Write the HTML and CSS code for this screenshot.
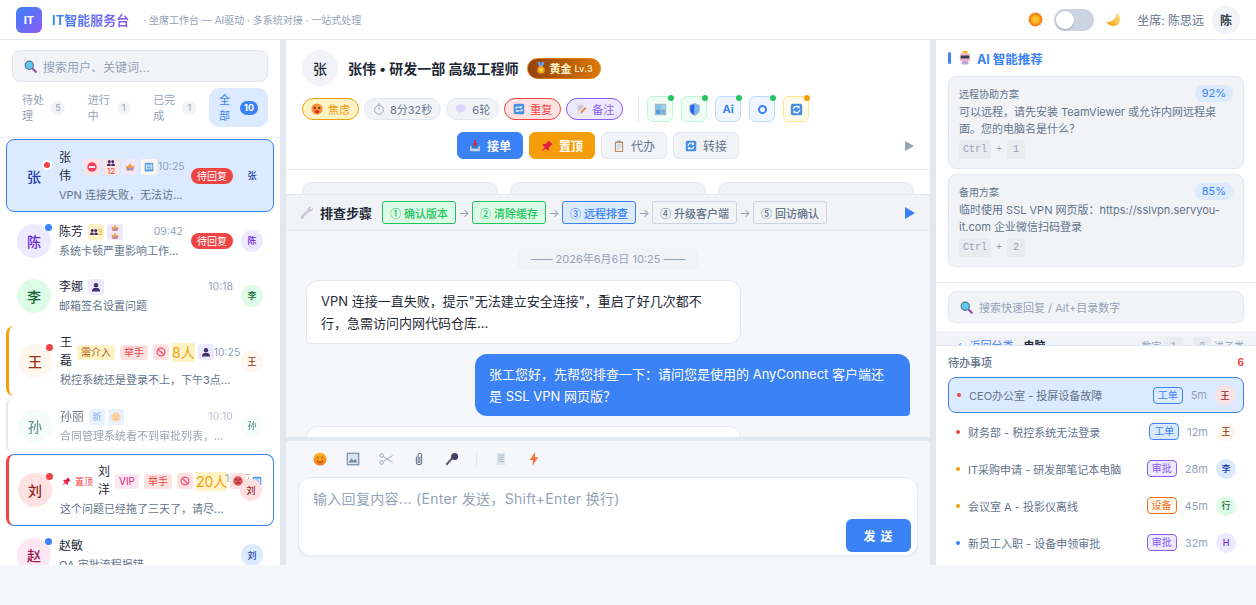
FILE: index.html
```html
<!DOCTYPE html>
<html lang="zh-CN">
<head>
    <meta charset="UTF-8">
    <meta name="viewport" content="width=device-width, initial-scale=1.0">
    <title>IT智能服务台</title>
    <link rel="stylesheet" href="styles.css">
</head>
<body>
    <!-- icon sprite -->
    <svg class="sprite" xmlns="http://www.w3.org/2000/svg">
        <defs>
            <radialGradient id="g-sun"><stop offset="0" stop-color="#fcd34d"/><stop offset="1" stop-color="#f59e0b"/></radialGradient>
            <linearGradient id="g-moon" x1="1" y1="0" x2="0" y2="1"><stop offset="0" stop-color="#fde68a"/><stop offset="1" stop-color="#f59e0b"/></linearGradient>
            <linearGradient id="g-smile" x1="0" y1="0" x2="0" y2="1"><stop offset="0" stop-color="#fbbf24"/><stop offset="1" stop-color="#f97316"/></linearGradient>
            <linearGradient id="g-bolt" x1="0" y1="0" x2="0" y2="1"><stop offset="0" stop-color="#f97316"/><stop offset="1" stop-color="#f87171"/></linearGradient>
        </defs>
        <symbol id="i-sun" viewBox="0 0 16 16"><path d="M8 0l1.3 1.6L11 .6l.6 1.9 2-.2-.1 2 1.9.7-.9 1.8L16 8l-1.5 1.2.9 1.8-1.9.7.1 2-2-.2-.6 1.9-1.7-1L8 16l-1.3-1.6-1.7 1-.6-1.9-2 .2.1-2-1.9-.7.9-1.8L0 8l1.5-1.2-.9-1.8 1.9-.7-.1-2 2 .2L5 .6l1.7 1z" fill="#f97316"/><circle cx="8" cy="8" r="5.6" fill="url(#g-sun)"/></symbol>
        <symbol id="i-moon" viewBox="0 0 16 16"><path d="M11 .5C12 6 7 11 .5 10.500 2 15 9 16.500 13 13 16.500 9.500 15.500 3.500 11 .5z" fill="url(#g-moon)"/></symbol>
        <symbol id="i-search" viewBox="0 0 16 16"><line x1="10" y1="10" x2="14.500" y2="14.500" stroke="#8e4a9e" stroke-width="2.600" stroke-linecap="round"/><circle cx="6.500" cy="6.500" r="5" fill="#5ec8ee" stroke="#56739a" stroke-width="1.500"/></symbol>
        <symbol id="i-robot" viewBox="0 0 16 16"><rect x="5" y="0" width="6" height="3" fill="#fbbf24"/><rect x="2" y="2.500" width="12" height="9" rx="2.500" fill="#eeb4c6"/><rect x="3" y="5" width="10" height="3.600" rx="1.500" fill="#334155"/><rect x="4" y="11.500" width="8" height="4" rx="1.500" fill="#c4a6d8"/></symbol>
        <symbol id="i-medal" viewBox="0 0 16 16"><path d="M3.500 0h3.500l1 4 1-4h3.500l-2.500 7h-4z" fill="#60a5fa"/><circle cx="8" cy="10.500" r="5" fill="#f59e0b"/><circle cx="8" cy="10.500" r="2.600" fill="#fcd34d"/></symbol>
        <symbol id="i-worry" viewBox="0 0 16 16"><circle cx="8" cy="8" r="7.500" fill="#fb923c"/><circle cx="5" cy="6.500" r="1.500" fill="#7c2d12"/><circle cx="11" cy="6.500" r="1.500" fill="#7c2d12"/><ellipse cx="8" cy="11.500" rx="3" ry="2.200" fill="#dc2626"/></symbol>
        <symbol id="i-watch" viewBox="0 0 16 16"><circle cx="8" cy="9" r="5.800" fill="none" stroke="#94a3b8" stroke-width="1.200"/><path d="M8 9V5M6.300 1.500h3.400" fill="none" stroke="#94a3b8" stroke-width="1.200"/></symbol>
        <symbol id="i-bubble" viewBox="0 0 16 16"><ellipse cx="8" cy="7" rx="7" ry="5.200" fill="#ddd6fe"/><path d="M5 11l-1 3.500 4-2.500z" fill="#ddd6fe"/></symbol>
        <symbol id="i-repeat" viewBox="0 0 16 16"><rect x="1" y="1" width="14" height="14" rx="2" fill="#4a90e2"/><path d="M4 8V5.500h7M12 8v2.500H5" fill="none" stroke="#fff" stroke-width="1.300"/><path d="M10 3.500l2.500 2-2.500 2zM6 8.500l-2.500 2 2.500 2z" fill="#fff"/></symbol>
        <symbol id="i-refresh" viewBox="0 0 16 16"><rect x="1" y="1" width="14" height="14" rx="2" fill="#4a90e2"/><path d="M4 7.500a4 4 0 017-2M12 8.500a4 4 0 01-7 2" fill="none" stroke="#fff" stroke-width="1.500"/><path d="M11.800 3v3.500H8.500zM4.200 13V9.500h3.300z" fill="#fff"/></symbol>
        <symbol id="i-memo" viewBox="0 0 16 16"><rect x="2.500" y="1" width="9.500" height="14" fill="#e4e1ea"/><path d="M4 4h6M4 6.500h6M4 9h3" stroke="#a8a3b5"/><line x1="14.500" y1="6" x2="8" y2="13" stroke="#f97316" stroke-width="2.200"/></symbol>
        <symbol id="i-window" viewBox="0 0 16 16"><rect x="1" y="1" width="14" height="14" fill="#a9b5c6"/><rect x="2.500" y="2.500" width="5" height="5" fill="#7cc4ec"/><rect x="8.500" y="2.500" width="5" height="5" fill="#93d5f5"/><rect x="2.500" y="8.500" width="5" height="5" fill="#4f9de0"/><rect x="8.500" y="8.500" width="5" height="5" fill="#6cb6ea"/></symbol>
        <symbol id="i-shield" viewBox="0 0 16 16"><path d="M8 0l6.500 2.500V8c0 4-3 6.500-6.500 8-3.500-1.500-6.500-4-6.500-8V2.500z" fill="#a9b5c6"/><path d="M8 1.200L2.700 3.300V8c0 3.300 2.400 5.300 5.300 6.600z" fill="#2563eb"/><path d="M8 1.200l5.300 2.100V8c0 3.300-2.400 5.300-5.300 6.600z" fill="#7db8f5"/></symbol>
        <symbol id="i-inbox" viewBox="0 0 16 16"><rect x="1.500" y="8" width="13" height="7" rx="1" fill="#c6d5e6"/><rect x="3.500" y="5" width="9" height="6.500" fill="#2f7fd6"/><path d="M6.700 0h2.600v4.500h2L8 9 4.700 4.500h2z" fill="#e11d48"/></symbol>
        <symbol id="i-pin" viewBox="0 0 16 16"><path d="M10 .5l5.500 5.500-1.800.6-3.400 3.300.2 3-1.300 1.300-3-3L1 15l-.2-.2 4.200-5.600-3-3L3.300 5l3 .2 3.300-3.400z" fill="#e11d48"/></symbol>
        <symbol id="i-clipboard" viewBox="0 0 16 16"><rect x="2.500" y="2" width="11" height="14" rx="1" fill="#c98a5e"/><rect x="4" y="4" width="8" height="10.500" fill="#f1f5f9"/><path d="M5 6.500h6M5 9h6M5 11.500h4" stroke="#a0aec0"/><rect x="5.500" y="0.500" width="5" height="3" rx="1" fill="#94a3b8"/></symbol>
        <symbol id="i-wrench" viewBox="0 0 16 16"><path d="M3.500 12.500l8-8" stroke="#cdc7d9" stroke-width="3"/><path d="M9.500 4a3.500 3.500 0 015-3l-2.200 2.200 1.200 1.200L15.700 2.200a3.500 3.500 0 01-4.700 4.500zM1.200 12.200a2 2 0 013.600 2.600 2 2 0 01-3.600-2.600z" fill="#cdc7d9"/></symbol>
        <symbol id="i-smile" viewBox="0 0 16 16"><circle cx="8" cy="8" r="7.500" fill="url(#g-smile)"/><path d="M4.500 6.500q1-1.500 2 0M9.500 6.500q1-1.500 2 0M4.500 10q3.500 3.500 7 0" fill="none" stroke="#7c2d12" stroke-width="1"/></symbol>
        <symbol id="i-picture" viewBox="0 0 16 16"><rect x="1.500" y="1.500" width="13" height="13" fill="#dbe4ee" stroke="#7f96b0" stroke-width="1.500"/><path d="M3 12l3-5 2.500 3 2-2 2.500 4z" fill="#6f88a6"/></symbol>
        <symbol id="i-scissors" viewBox="0 0 16 16"><circle cx="3" cy="4" r="2" fill="none" stroke="#94a3b8"/><circle cx="3" cy="12" r="2" fill="none" stroke="#94a3b8"/><path d="M4.700 5l10.800 7M4.700 11L15.500 4" stroke="#94a3b8"/></symbol>
        <symbol id="i-paperclip" viewBox="0 0 16 16"><path d="M5 5v6.500a3 3 0 006 0V3.500a2 2 0 00-4 0V11a1 1 0 002 0V5" fill="none" stroke="#64748b" stroke-width="1.200"/></symbol>
        <symbol id="i-mic" viewBox="0 0 16 16"><line x1="1.500" y1="14.500" x2="9" y2="6" stroke="#6b6280" stroke-width="2.400"/><circle cx="11" cy="5" r="4" fill="#4c3f63"/></symbol>
        <symbol id="i-doc" viewBox="0 0 16 16"><rect x="3" y="1" width="10" height="14" fill="#e2e8f0"/><path d="M4.500 3.500h7M4.500 6h7M4.500 8.500h7M4.500 11h7" stroke="#a3b1c2"/></symbol>
        <symbol id="i-bolt" viewBox="0 0 16 16"><path d="M9.500 0L3 9h4l-1 7 7-10H9z" fill="url(#g-bolt)"/></symbol>
        <symbol id="i-noentry" viewBox="0 0 16 16"><circle cx="8" cy="8" r="7.500" fill="#f43f5e"/><rect x="3" y="6.500" width="10" height="3" fill="#fff"/></symbol>
        <symbol id="i-people" viewBox="0 0 16 16"><circle cx="4.500" cy="5" r="3" fill="#43306e"/><circle cx="11.500" cy="5" r="3" fill="#43306e"/><path d="M0 14c0-4 2-5 4.500-5S7.500 10 7.500 14zM8.500 14c0-4 1-5 3-5s4.500 1 4.500 5z" fill="#43306e"/></symbol>
        <symbol id="i-person" viewBox="0 0 16 16"><circle cx="8" cy="5" r="3.500" fill="#43306e"/><path d="M1.500 15c0-4.500 3-6 6.500-6s6.500 1.500 6.500 6z" fill="#43306e"/></symbol>
        <symbol id="i-ban" viewBox="0 0 16 16"><circle cx="8" cy="8" r="6.300" fill="none" stroke="#f0517a" stroke-width="2"/><line x1="3.500" y1="3.500" x2="12.500" y2="12.500" stroke="#f0517a" stroke-width="2"/></symbol>
        <symbol id="i-angry" viewBox="0 0 16 16"><circle cx="8" cy="8" r="7.500" fill="#e0525a"/><path d="M3.500 5l3 1.500M12.500 5l-3 1.500M5 11.500q3-2 6 0" fill="none" stroke="#5f1d1d" stroke-width="1.300"/></symbol>
        <symbol id="i-parcel" viewBox="0 0 16 16"><path d="M1 5l3 2 4-5 4 5 3-2-1.500 9h-11z" fill="#f59e42"/><rect x="3" y="9" width="10" height="4" fill="#a78bda"/></symbol>
        <symbol id="i-screen" viewBox="0 0 16 16"><rect x="1" y="1" width="14" height="14" rx="2" fill="#5aa2ea"/><rect x="3.500" y="5" width="9" height="6" fill="none" stroke="#fff" stroke-width="1.200"/><line x1="3.500" y1="7.500" x2="12.500" y2="7.500" stroke="#fff"/></symbol>
        <symbol id="i-neutral" viewBox="0 0 16 16"><circle cx="8" cy="8" r="7.500" fill="#fbbf77"/><path d="M4.500 6.500h2M9.500 6.500h2M5.500 11h5" stroke="#b45309"/></symbol>
    </svg>

    <header class="topbar">
        <div class="logo">IT</div>
        <div class="brand">IT智能服务台</div>
        <div class="slogan">· 坐席工作台 — AI驱动 · 多系统对接 · 一站式处理</div>
        <div class="topbar-right">
            <svg class="ico theme-icon"><use href="#i-sun"/></svg>
            <span class="switch"><span class="knob"></span></span>
            <svg class="ico theme-icon"><use href="#i-moon"/></svg>
            <span class="agent">坐席: 陈思远</span>
            <span class="agent-avatar">陈</span>
        </div>
    </header>

    <main class="app">
        <!-- left: conversation list -->
        <aside class="left">
            <div class="left-head">
                <div class="search"><svg class="ico search-icon"><use href="#i-search"/></svg>搜索用户、关键词...</div>
                <div class="tabs">
                    <div class="tab"><span class="tab-text">待处理</span><span class="count">5</span></div>
                    <div class="tab"><span class="tab-text">进行中</span><span class="count">1</span></div>
                    <div class="tab"><span class="tab-text">已完成</span><span class="count">1</span></div>
                    <div class="tab active"><span class="tab-text">全部</span><span class="count">10</span></div>
                </div>
            </div>
            <div class="list">
                <div class="item selected">
                    <div class="avatar av-blue av-plain">张<i class="dot dot-red dot-ring"></i></div>
                    <div class="item-main">
                        <div class="name-row">
                            <span class="name narrow">张伟</span>
                            <span class="tag t-red"><svg class="ico"><use href="#i-noentry"/></svg></span>
                            <span class="tag t-red stack"><svg class="ico"><use href="#i-people"/></svg><b>12</b></span>
                            <span class="tag t-purple"><svg class="ico"><use href="#i-parcel"/></svg></span>
                            <span class="tag t-cream"><svg class="ico"><use href="#i-screen"/></svg></span>
                            <span class="time">10:25</span>
                        </div>
                        <div class="preview">VPN 连接失败，无法访...</div>
                    </div>
                    <span class="badge">待回复</span>
                    <span class="mini av-blue av-plain">张</span>
                </div>

                <div class="item">
                    <div class="avatar av-purple">陈<i class="dot dot-blue"></i></div>
                    <div class="item-main">
                        <div class="name-row">
                            <span class="name">陈芳</span>
                            <span class="tag t-yellow wide-count"><svg class="ico"><use href="#i-people"/></svg><b>3</b></span>
                            <span class="tag t-purple stack"><svg class="ico"><use href="#i-parcel"/></svg><svg class="ico"><use href="#i-parcel"/></svg></span>
                            <span class="time">09:42</span>
                        </div>
                        <div class="preview">系统卡顿严重影响工作...</div>
                    </div>
                    <span class="badge">待回复</span>
                    <span class="mini av-purple">陈</span>
                </div>

                <div class="item">
                    <div class="avatar av-green">李</div>
                    <div class="item-main">
                        <div class="name-row">
                            <span class="name">李娜</span>
                            <span class="tag t-purple"><svg class="ico"><use href="#i-person"/></svg></span>
                            <span class="time">10:18</span>
                        </div>
                        <div class="preview">邮箱签名设置问题</div>
                    </div>
                    <span class="mini av-green">李</span>
                </div>

                <div class="item edge-orange">
                    <div class="avatar av-orange">王<i class="dot dot-red"></i></div>
                    <div class="item-main">
                        <div class="name-row">
                            <span class="name narrow">王磊</span>
                            <span class="tag t-yellow text">需介入</span>
                            <span class="tag t-red text">举手</span>
                            <span class="tag t-red"><svg class="ico"><use href="#i-ban"/></svg></span>
                            <span class="people">8人</span>
                            <span class="tag t-purple"><svg class="ico"><use href="#i-person"/></svg></span>
                            <span class="time tight">10:25</span>
                        </div>
                        <div class="preview">税控系统还是登录不上，下午3点...</div>
                    </div>
                    <span class="mini av-orange">王</span>
                </div>

                <div class="item edge-gray">
                    <div class="avatar av-teal">孙</div>
                    <div class="item-main">
                        <div class="name-row">
                            <span class="name">孙丽</span>
                            <span class="tag t-blue">新</span>
                            <span class="tag t-blue"><svg class="ico"><use href="#i-neutral"/></svg></span>
                            <span class="time">10:10</span>
                        </div>
                        <div class="preview">合同管理系统看不到审批列表，...</div>
                    </div>
                    <span class="mini av-teal">孙</span>
                </div>

                <div class="item edge-red">
                    <div class="avatar av-red">刘<i class="dot dot-red"></i></div>
                    <div class="item-main">
                        <div class="name-row overflow">
                            <span class="time over">10:07</span>
                            <svg class="ico pin"><use href="#i-pin"/></svg>
                            <span class="pin-text">置顶</span>
                            <span class="name narrow">刘洋</span>
                            <span class="tag t-pink text">VIP</span>
                            <span class="tag t-red text">举手</span>
                            <span class="tag t-red"><svg class="ico"><use href="#i-ban"/></svg></span>
                            <span class="people">20人</span>
                            <span class="tag t-red"><svg class="ico"><use href="#i-angry"/></svg></span>
                            <span class="tag t-cream"><svg class="ico"><use href="#i-screen"/></svg></span>
                        </div>
                        <div class="preview">这个问题已经拖了三天了，请尽...</div>
                    </div>
                    <span class="mini av-red on-top">刘</span>
                </div>

                <div class="item last">
                    <div class="avatar av-pink">赵<i class="dot dot-blue"></i></div>
                    <div class="item-main">
                        <div class="name-row">
                            <span class="name">赵敏</span>
                        </div>
                        <div class="preview">OA 审批流程报错</div>
                    </div>
                    <span class="mini av-blue">刘</span>
                </div>
            </div>
        </aside>

        <!-- center: conversation -->
        <section class="center">
            <div class="info">
                <div class="user-row">
                    <span class="user-avatar">张</span>
                    <span class="user-name">张伟 • 研发一部 高级工程师</span>
                    <span class="level"><svg class="ico"><use href="#i-medal"/></svg>黄金 <small>Lv.3</small></span>
                </div>
                <div class="chip-row">
                    <span class="chip c-yellow"><svg class="ico"><use href="#i-worry"/></svg>焦虑</span>
                    <span class="chip"><svg class="ico"><use href="#i-watch"/></svg>8分32秒</span>
                    <span class="chip"><svg class="ico"><use href="#i-bubble"/></svg>6轮</span>
                    <span class="chip c-red"><svg class="ico"><use href="#i-repeat"/></svg>重复</span>
                    <span class="chip c-purple"><svg class="ico"><use href="#i-memo"/></svg>备注</span>
                    <span class="vline"></span>
                    <span class="sys s-green"><svg class="ico"><use href="#i-window"/></svg><i class="sys-dot"></i></span>
                    <span class="sys s-green"><svg class="ico"><use href="#i-shield"/></svg><i class="sys-dot"></i></span>
                    <span class="sys s-blue"><b>Ai</b><i class="sys-dot"></i></span>
                    <span class="sys s-blue"><span class="ring"></span><i class="sys-dot"></i></span>
                    <span class="sys s-yellow"><svg class="ico"><use href="#i-refresh"/></svg><i class="sys-dot orange"></i></span>
                </div>
                <div class="action-row">
                    <button class="act a-blue"><svg class="ico"><use href="#i-inbox"/></svg>接单</button>
                    <button class="act a-orange"><svg class="ico"><use href="#i-pin"/></svg>置顶</button>
                    <button class="act"><svg class="ico"><use href="#i-clipboard"/></svg>代办</button>
                    <button class="act"><svg class="ico"><use href="#i-refresh"/></svg>转接</button>
                    <span class="more"></span>
                </div>
            </div>
            <div class="cards-strip">
                <div class="ghost-card"></div>
                <div class="ghost-card"></div>
                <div class="ghost-card"></div>
            </div>
            <div class="steps">
                <span class="steps-title"><svg class="ico"><use href="#i-wrench"/></svg>排查步骤</span>
                <span class="step done"><i>①</i>确认版本</span>
                <span class="arrow">→</span>
                <span class="step done"><i>②</i>清除缓存</span>
                <span class="arrow">→</span>
                <span class="step now"><i>③</i>远程排查</span>
                <span class="arrow">→</span>
                <span class="step"><i>④</i>升级客户端</span>
                <span class="arrow">→</span>
                <span class="step"><i>⑤</i>回访确认</span>
                <span class="steps-more"></span>
            </div>
            <div class="chat">
                <div class="date"><span>—— 2026年6月6日 10:25 ——</span></div>
                <div class="bubble user">VPN 连接一直失败，提示"无法建立安全连接"，重启了好几次都不行，急需访问内网代码仓库...</div>
                <div class="bubble agent-msg">张工您好，先帮您排查一下：请问您是使用的 AnyConnect 客户端还是 SSL VPN 网页版？</div>
                <div class="bubble user">用的是 AnyConnect 客户端，版本不太清楚</div>
            </div>
            <div class="composer">
                <div class="tools">
                    <svg class="ico"><use href="#i-smile"/></svg>
                    <svg class="ico"><use href="#i-picture"/></svg>
                    <svg class="ico"><use href="#i-scissors"/></svg>
                    <svg class="ico"><use href="#i-paperclip"/></svg>
                    <svg class="ico"><use href="#i-mic"/></svg>
                    <i class="tool-line"></i>
                    <svg class="ico"><use href="#i-doc"/></svg>
                    <svg class="ico"><use href="#i-bolt"/></svg>
                </div>
                <div class="input-box">
                    <div class="placeholder">输入回复内容... (Enter 发送，Shift+Enter 换行)</div>
                    <div class="send-row"><button class="send">发 送</button></div>
                </div>
            </div>
        </section>

        <!-- right: ai + quick reply + todo -->
        <aside class="right">
            <div class="ai">
                <div class="ai-title"><span class="ai-mark"></span><svg class="ico"><use href="#i-robot"/></svg>AI 智能推荐</div>
                <div class="rec">
                    <div class="rec-head"><span>远程协助方案</span><span class="pct">92%</span></div>
                    <p>可以远程，请先安装 TeamViewer 或允许内网远程桌面。您的电脑名是什么？</p>
                    <div class="keys"><kbd>Ctrl</kbd><span>+</span><kbd>1</kbd></div>
                </div>
                <div class="rec">
                    <div class="rec-head"><span>备用方案</span><span class="pct">85%</span></div>
                    <p>临时使用 SSL VPN 网页版：https://sslvpn.servyou-it.com 企业微信扫码登录</p>
                    <div class="keys"><kbd>Ctrl</kbd><span>+</span><kbd>2</kbd></div>
                </div>
            </div>
            <div class="quick">
                <div class="search small"><svg class="ico search-icon"><use href="#i-search"/></svg>搜索快速回复 / Alt+目录数字</div>
            </div>
            <div class="crumbs">
                <span class="back">← 返回分类</span><b>电脑</b>
                <span class="crumb-hint">数字 <kbd>1</kbd> - <kbd>9</kbd> 进子类</span>
            </div>
            <div class="todo">
                <div class="todo-head"><span>待办事项</span><b>6</b></div>
                <div class="todo-row current">
                    <i class="pt red"></i><span class="todo-text">CEO办公室 - 投屏设备故障</span>
                    <span class="kind k-blue">工单</span><span class="mins">5m</span><span class="mini av-red">王</span>
                </div>
                <div class="todo-row">
                    <i class="pt red"></i><span class="todo-text">财务部 - 税控系统无法登录</span>
                    <span class="kind k-blue">工单</span><span class="mins">12m</span><span class="mini av-orange">王</span>
                </div>
                <div class="todo-row">
                    <i class="pt orange"></i><span class="todo-text">IT采购申请 - 研发部笔记本电脑</span>
                    <span class="kind k-purple">审批</span><span class="mins">28m</span><span class="mini av-blue">李</span>
                </div>
                <div class="todo-row">
                    <i class="pt orange"></i><span class="todo-text">会议室 A - 投影仪离线</span>
                    <span class="kind k-orange">设备</span><span class="mins">45m</span><span class="mini av-green">行</span>
                </div>
                <div class="todo-row">
                    <i class="pt blue"></i><span class="todo-text">新员工入职 - 设备申领审批</span>
                    <span class="kind k-purple">审批</span><span class="mins">32m</span><span class="mini av-purple">H</span>
                </div>
            </div>
        </aside>
    </main>
</body>
</html>
```

FILE: styles.css
```css
* {
    margin: 0;
    padding: 0;
    box-sizing: border-box;
}

html, body {
    height: 605px;
    overflow: hidden;
}

body {
    background: #f5f7fb;
    color: #1f2937;
    font-family: Inter, "Noto Sans CJK SC", sans-serif;
    font-size: 13px;
}

button {
    font-family: inherit;
    border: none;
}

.sprite {
    position: absolute;
    width: 0;
    height: 0;
}

.ico {
    width: 1em;
    height: 1em;
    flex: none;
    display: inline-block;
}

/* top bar */
.topbar {
    height: 40px;
    display: flex;
    align-items: center;
    padding: 0 16px;
    background: #fff;
    border-bottom: 1px solid #e2e8f0;
}

.logo {
    width: 26px;
    height: 26px;
    border-radius: 6px;
    background: linear-gradient(135deg, #3b82f6, #8b5cf6);
    color: #fff;
    font-size: 11px;
    font-weight: 700;
    display: flex;
    align-items: center;
    justify-content: center;
}

.brand {
    margin-left: 10px;
    font-size: 13px;
    font-weight: 700;
    background: linear-gradient(90deg, #3b82f6, #8b5cf6);
    -webkit-background-clip: text;
    background-clip: text;
    color: transparent;
}

.slogan {
    margin-left: 14px;
    font-size: 10px;
    color: #94a3b8;
}

.topbar-right {
    margin-left: auto;
    display: flex;
    align-items: center;
}

.theme-icon {
    font-size: 15px;
}

.switch {
    width: 40px;
    height: 22px;
    margin: 0 12px 0 11px;
    padding: 2px;
    border-radius: 11px;
    background: #cbd5e1;
}

.knob {
    display: block;
    width: 18px;
    height: 18px;
    border-radius: 50%;
    background: #fff;
    box-shadow: 0 1px 2px rgba(0, 0, 0, 0.2);
}

.agent {
    margin-left: 16px;
    font-size: 12px;
    color: #64748b;
}

.agent-avatar {
    width: 28px;
    height: 28px;
    margin-left: 8px;
    border-radius: 50%;
    background: #f1f3f7;
    color: #374151;
    font-size: 12px;
    font-weight: 700;
    display: flex;
    align-items: center;
    justify-content: center;
}

/* columns */
.app {
    height: 525px;
    display: grid;
    grid-template-columns: 280px 655px 321px;
    overflow: hidden;
}

.left, .center, .right {
    height: 525px;
    overflow: hidden;
    display: flex;
    flex-direction: column;
    background: #fff;
}

.center {
    border-left: 6px solid #e2e8f0;
    border-right: 5px solid #e2e8f0;
}

.right {
    border-left: 1px solid #e2e8f0;
}

/* left column */
.left-head {
    height: 98px;
    padding: 10px 12px 0;
    border-bottom: 1px solid #e2e8f0;
    flex: none;
}

.search {
    height: 32px;
    display: flex;
    align-items: center;
    padding-left: 11px;
    background: #f1f3f7;
    border: 1px solid #e2e8f0;
    border-radius: 8px;
    color: #94a3b8;
    font-size: 12px;
}

.search-icon {
    font-size: 13px;
    margin-right: 6px;
}

.tabs {
    display: grid;
    grid-template-columns: 1fr 1fr 1fr 59px;
    margin-top: 6px;
    height: 39px;
}

.tab {
    display: flex;
    align-items: center;
    gap: 7px;
    padding: 0 10px;
    border-radius: 10px;
    color: #94a3b8;
    font-size: 11px;
    line-height: 16px;
}

.tab-text {
    width: 22px;
    flex: none;
}

.tab .count {
    min-width: 14px;
    height: 14px;
    border-radius: 7px;
    background: #f1f3f7;
    color: #94a3b8;
    font-size: 9px;
    line-height: 14px;
    text-align: center;
    flex: none;
}

.tab.active {
    background: #dbeafe;
    color: #3b82f6;
}

.tab.active .tab-text {
    width: 12px;
}

.tab.active .count {
    min-width: 18px;
    margin-left: 2px;
    background: #3b82f6;
    color: #fff;
    font-weight: 700;
}

.list {
    flex: 1;
    padding: 1px 6px 0;
    display: flex;
    flex-direction: column;
    gap: 2px;
    overflow: hidden;
}

.item {
    height: 53px;
    flex: none;
    position: relative;
    display: flex;
    align-items: center;
    padding: 0 11px;
    border-radius: 8px;
}

.item.selected {
    height: 73px;
    background: #dbeafe;
    border: 1px solid #3b82f6;
    padding: 0 10px;
}

.edge-orange {
    height: 70px;
    margin-top: 2px;
    padding-left: 9px;
    border-left: 3px solid #f59e0b;
}

.edge-gray {
    height: 55px;
    padding-left: 10px;
    border-left: 2px solid #e2e8f0;
}

.edge-gray > * {
    opacity: 0.65;
}

.edge-red {
    height: 72px;
    margin-top: -1px;
    padding-left: 9px;
    border: 1px solid #3b82f6;
    border-left: 3px solid #ef4444;
}

.item.last {
    height: 50px;
    margin-top: 2px;
}

.avatar {
    width: 34px;
    height: 34px;
    flex: none;
    position: relative;
    border-radius: 50%;
    font-size: 14px;
    font-weight: 500;
    display: flex;
    align-items: center;
    justify-content: center;
}

.av-blue { background: #dbeafe; color: #1e40af; }
.av-purple { background: #ede9fe; color: #6d28d9; }
.av-green { background: #dcfce7; color: #166534; }
.av-orange { background: #fff7ed; color: #9a3412; }
.av-teal { background: #f0fdfa; color: #115e59; }
.av-red { background: #fee2e2; color: #991b1b; }
.av-pink { background: #fce7f3; color: #9d174d; }

.dot {
    position: absolute;
    top: 0;
    right: -1px;
    width: 7px;
    height: 7px;
    border-radius: 50%;
}

.dot-red { background: #ef4444; }
.dot-blue { background: #3b82f6; }
.dot-ring {
    width: 10px;
    height: 10px;
    top: 1px;
    right: -1px;
    background: #ef4444;
    border: 2px solid #fff;
}

.item-main {
    flex: 1;
    min-width: 0;
    margin-left: 8px;
}

.name-row {
    display: flex;
    align-items: center;
    gap: 3px;
}

.name {
    font-size: 12px;
    line-height: 18px;
    color: #1f2937;
    flex: none;
    margin-right: 2px;
}

.name.narrow {
    width: 12px;
}

.selected .name.narrow {
    margin-right: 10px;
}

.tag {
    width: 16px;
    min-height: 16px;
    flex: none;
    display: flex;
    align-items: center;
    justify-content: center;
    flex-wrap: wrap;
    border-radius: 3px;
    font-size: 9px;
    line-height: 16px;
    text-align: center;
}

.tag .ico {
    font-size: 10px;
}

.tag.text {
    width: auto;
    min-height: 15px;
    line-height: 15px;
    padding: 0 4px;
    font-size: 10px;
    margin-right: 2px;
}

.tag.stack {
    line-height: 8px;
    flex-direction: column;
    flex-wrap: nowrap;
    height: 16px;
}

.tag.stack .ico {
    font-size: 8px;
}

.tag.stack b {
    font-weight: 400;
    color: #ef4444;
    font-size: 8px;
}

.tag.wide-count {
    flex-wrap: nowrap;
}

.tag.wide-count .ico {
    font-size: 8px;
}

.tag.wide-count b {
    font-weight: 400;
    color: #f59e0b;
    font-size: 8px;
}

.t-red { background: #fee2e2; color: #ef4444; }
.t-purple { background: #ede9fe; color: #7c3aed; }
.t-yellow { background: #fef3c7; color: #b45309; }
.t-cream { background: #fff7ed; color: #f97316; }
.t-blue { background: #dbeafe; color: #3b82f6; }
.t-pink { background: #fce7f3; color: #db2777; }

.people {
    flex: none;
    background: #fef3c7;
    color: #f59e0b;
    font-size: 14px;
    line-height: 19px;
}

.pin {
    font-size: 9px;
    margin-right: 1px;
}

.pin-text {
    flex: none;
    color: #ef4444;
    font-size: 9px;
    margin-right: 2px;
}

.time {
    margin-left: auto;
    flex: none;
    color: #94a3b8;
    font-size: 10.5px;
}

.selected .time {
    margin-left: -2px;
}

.time.tight {
    margin-left: -3px;
}

.name-row.overflow {
    position: relative;
    margin-left: 2px;
    margin-right: -40px;
}

.name-row.overflow .tag {
    position: relative;
}

.time.over {
    position: absolute;
    left: 163px;
    top: 9px;
}

.preview {
    margin-top: 2px;
    font-size: 11px;
    line-height: 16px;
    color: #64748b;
    white-space: nowrap;
    overflow: hidden;
}

.badge {
    flex: none;
    width: 42px;
    height: 16px;
    margin: 0 8px;
    border-radius: 8px;
    background: #ef4444;
    color: #fff;
    font-size: 10px;
    line-height: 16px;
    text-align: center;
}

.mini {
    width: 22px;
    height: 22px;
    flex: none;
    margin-left: 8px;
    border-radius: 50%;
    font-size: 9px;
    font-weight: 500;
    display: flex;
    align-items: center;
    justify-content: center;
}

.badge + .mini {
    margin-left: 0;
}

.on-top {
    position: relative;
    z-index: 1;
}

/* center column */
.info {
    height: 130px;
    flex: none;
    padding: 10px 16px 0;
    border-bottom: 1px solid #e2e8f0;
}

.user-row {
    display: flex;
    align-items: center;
    height: 36px;
}

.user-avatar {
    width: 36px;
    height: 36px;
    border-radius: 50%;
    background: #f1f3f7;
    font-size: 14px;
    font-weight: 500;
    display: flex;
    align-items: center;
    justify-content: center;
}

.user-name {
    margin-left: 10px;
    font-size: 14px;
    font-weight: 700;
}

.level {
    margin-left: 8px;
    height: 21px;
    padding: 0 7px;
    display: flex;
    align-items: center;
    gap: 3px;
    border: 1px solid #d97706;
    border-radius: 11px;
    background: linear-gradient(90deg, #92400e, #d97706);
    color: #fef3c7;
    font-size: 11px;
    font-weight: 700;
}

.level .ico {
    font-size: 12px;
}

.level small {
    font-size: 9px;
    opacity: 0.85;
}

.chip-row {
    display: flex;
    align-items: center;
    height: 26px;
    margin-top: 10px;
    gap: 5px;
}

.chip {
    height: 22px;
    padding: 0 8px;
    display: flex;
    align-items: center;
    gap: 5px;
    border-radius: 11px;
    background: #f1f3f7;
    border: 1px solid #e2e8f0;
    color: #64748b;
    font-size: 11px;
}

.chip .ico {
    font-size: 12px;
}

.c-yellow { background: #fef3c7; border-color: #f59e0b; color: #f59e0b; }
.c-red { background: #fee2e2; border-color: #ef4444; color: #ef4444; }
.c-purple { background: #ede9fe; border-color: #8b5cf6; color: #8b5cf6; }

.vline {
    width: 1px;
    height: 26px;
    margin: 0 3px 0 10px;
    background: #e2e8f0;
}

.sys {
    width: 26px;
    height: 26px;
    position: relative;
    margin-right: 3px;
    border-radius: 6px;
    border: 1px solid #bfdbfe;
    background: #eff6ff;
    display: flex;
    align-items: center;
    justify-content: center;
}

.sys .ico {
    font-size: 13px;
}

.sys b {
    color: #3b82f6;
    font-size: 11px;
}

.s-green { background: #f0fdf4; border-color: #bbf7d0; }
.s-yellow { background: #fffbeb; border-color: #fde68a; }

.ring {
    width: 9px;
    height: 9px;
    border: 2px solid #3b82f6;
    border-radius: 50%;
}

.sys-dot {
    position: absolute;
    top: -2px;
    right: -2px;
    width: 6px;
    height: 6px;
    border-radius: 50%;
    background: #22c55e;
}

.sys-dot.orange {
    background: #f59e0b;
}

.action-row {
    display: flex;
    align-items: center;
    height: 27px;
    margin-top: 10px;
    padding-left: 155px;
    gap: 6px;
}

.act {
    width: 66px;
    height: 27px;
    border-radius: 6px;
    background: #f1f3f7;
    border: 1px solid #e2e8f0;
    color: #64748b;
    font-size: 12px;
    display: flex;
    align-items: center;
    justify-content: center;
    gap: 6px;
}

.act .ico {
    font-size: 12px;
}

.a-blue { background: #3b82f6; border-color: #3b82f6; color: #fff; font-weight: 700; }
.a-orange { background: #f59e0b; border-color: #f59e0b; color: #fff; font-weight: 700; }

.more {
    margin-left: auto;
    border-left: 9px solid #94a3b8;
    border-top: 5px solid transparent;
    border-bottom: 5px solid transparent;
}

.cards-strip {
    height: 24px;
    flex: none;
    padding: 12px 16px 0;
    display: flex;
    gap: 12px;
    overflow: hidden;
}

.ghost-card {
    flex: 1;
    height: 40px;
    border-radius: 10px;
    background: #f1f3f7;
    border: 1px solid #e2e8f0;
}

.steps {
    height: 37px;
    flex: none;
    padding: 0 15px 0 14px;
    display: flex;
    align-items: center;
    background: #f1f3f7;
    border-top: 1px solid #e2e8f0;
    border-bottom: 1px solid #e2e8f0;
}

.steps-title {
    display: flex;
    align-items: center;
    gap: 7px;
    font-size: 13px;
    font-weight: 700;
    margin-right: 10px;
}

.steps-title .ico {
    font-size: 13px;
}

.step {
    height: 23px;
    padding: 0 7px;
    display: flex;
    align-items: center;
    border-radius: 3px;
    border: 1px solid #cbd5e1;
    color: #64748b;
    font-size: 11px;
    font-weight: 500;
    flex: none;
}

.step i {
    width: 14px;
    font-family: "Noto Sans CJK SC", sans-serif;
    font-style: normal;
    font-size: 11px;
}

.step.done { background: #dcfce7; border-color: #22c55e; color: #22c55e; }
.step.now { background: #dbeafe; border-color: #3b82f6; color: #3b82f6; }

.arrow {
    width: 16px;
    flex: none;
    text-align: center;
    color: #94a3b8;
    font-size: 12px;
}

.steps-more {
    margin-left: auto;
    border-left: 10px solid #3b82f6;
    border-top: 6px solid transparent;
    border-bottom: 6px solid transparent;
}

.chat {
    height: 206px;
    flex: none;
    padding: 17px 20px 0;
    background: #f5f7fb;
    overflow: hidden;
    display: flex;
    flex-direction: column;
}

.date {
    text-align: center;
    height: 22px;
    margin-bottom: 10px;
    flex: none;
}

.date span {
    display: inline-block;
    height: 22px;
    padding: 0 13px;
    border-radius: 8px;
    background: #f1f3f7;
    color: #94a3b8;
    font-size: 11px;
    line-height: 22px;
}

.bubble {
    width: 435px;
    flex: none;
    padding: 9px 14px;
    margin-bottom: 10px;
    border-radius: 12px;
    font-size: 13px;
    line-height: 22px;
}

.bubble.user {
    background: #fff;
    border: 1px solid #e2e8f0;
    border-bottom-left-radius: 4px;
    color: #1f2937;
}

.bubble.agent-msg {
    align-self: flex-end;
    background: #3b82f6;
    color: #fff;
    border-bottom-right-radius: 4px;
}

.composer {
    flex: 1;
    background: #f5f7fb;
    border-top: 4px solid #e2e8f0;
    padding: 0 12px;
}

.tools {
    height: 36px;
    display: flex;
    align-items: center;
    gap: 19px;
    padding-left: 15px;
}

.tools .ico {
    font-size: 14px;
}

.tool-line {
    width: 1px;
    height: 14px;
    margin: 0 -2px;
    background: #e2e8f0;
}

.input-box {
    height: 79px;
    padding: 12px 6px 4px 14px;
    background: #fff;
    border: 1px solid #e2e8f0;
    border-radius: 12px;
    box-shadow: 0 1px 2px rgba(0, 0, 0, 0.05);
}

.placeholder {
    color: #94a3b8;
    font-size: 14px;
    letter-spacing: 0.3px;
    line-height: 18px;
}

.send-row {
    display: flex;
    justify-content: flex-end;
    margin-top: 11px;
}

.send {
    width: 65px;
    height: 33px;
    border-radius: 6px;
    background: #3b82f6;
    color: #fff;
    font-size: 12px;
    letter-spacing: 1px;
    font-weight: 700;
}

/* right column */
.ai {
    height: 243px;
    flex: none;
    padding: 0 12px;
    border-bottom: 1px solid #e2e8f0;
}

.ai-title {
    height: 36px;
    display: flex;
    align-items: center;
    color: #3b82f6;
    font-size: 12.5px;
    font-weight: 700;
}

.ai-mark {
    width: 3px;
    height: 12px;
    margin-right: 7px;
    border-radius: 2px;
    background: #3b82f6;
}

.ai-title .ico {
    margin-right: 5px;
    font-size: 14px;
}

.rec {
    height: 93px;
    margin-bottom: 5px;
    padding: 8px 10px 0;
    background: #f1f3f7;
    border: 1px solid #e2e8f0;
    border-radius: 8px;
}

.rec-head {
    display: flex;
    justify-content: space-between;
    align-items: center;
    height: 17px;
    color: #64748b;
    font-size: 10px;
}

.pct {
    padding: 0 7px;
    border-radius: 8px;
    background: #dbeafe;
    color: #3b82f6;
    font-size: 11px;
    line-height: 17px;
}

.rec p {
    margin-top: 2px;
    color: #64748b;
    font-size: 11px;
    line-height: 17px;
}

.keys {
    display: flex;
    align-items: center;
    gap: 5px;
    margin-top: 2px;
    color: #94a3b8;
    font-size: 10px;
    font-family: "Liberation Mono", monospace;
}

kbd {
    display: inline-block;
    min-width: 18px;
    padding: 0 4px;
    height: 19px;
    line-height: 19px;
    text-align: center;
    border-radius: 3px;
    background: #e8ecf1;
    color: #94a3b8;
    font-family: "Liberation Mono", monospace;
    font-size: 10px;
}

.quick {
    height: 48px;
    flex: none;
    padding: 8px 12px 0;
}

.search.small {
    font-size: 11px;
}

.crumbs {
    height: 14px;
    flex: none;
    overflow: hidden;
    padding: 6px 12px 0 20px;
    display: flex;
    align-items: flex-start;
    background: #f1f3f7;
    font-size: 11px;
    line-height: 19px;
}

.back {
    color: #3b82f6;
    margin-right: 10px;
}

.crumb-hint {
    margin-left: auto;
    display: flex;
    gap: 3px;
    color: #94a3b8;
    font-size: 10px;
}

.todo {
    flex: 1;
    padding: 0 12px;
    border-top: 1px solid #e2e8f0;
    background: #fff;
}

.todo-head {
    height: 31px;
    display: flex;
    align-items: center;
    justify-content: space-between;
    color: #64748b;
    font-size: 11px;
    font-weight: 500;
}

.todo-head b {
    color: #ef4444;
    font-size: 10px;
}

.todo-row {
    height: 37px;
    display: flex;
    align-items: center;
    padding: 0 8px;
    border-radius: 8px;
    font-size: 11px;
    color: #64748b;
}

.todo-row .mini {
    margin-left: 8px;
    width: 20px;
    height: 20px;
}

.todo-row.current {
    height: 36px;
    background: #dbeafe;
    border: 1px solid #3b82f6;
}

.pt {
    width: 4px;
    height: 4px;
    margin-right: 8px;
    border-radius: 50%;
    flex: none;
}

.pt.red { background: #ef4444; }
.pt.orange { background: #f59e0b; }
.pt.blue { background: #3b82f6; }

.todo-text {
    flex: 1;
    white-space: nowrap;
    overflow: hidden;
}

.kind {
    width: 30px;
    height: 17px;
    flex: none;
    border-radius: 4px;
    border: 1px solid;
    font-size: 10px;
    line-height: 15px;
    text-align: center;
}

.k-blue { background: #dbeafe; color: #3b82f6; border-color: #3b82f6; }
.k-purple { background: #ede9fe; color: #8b5cf6; border-color: #8b5cf6; }
.k-orange { background: #fff7ed; color: #f97316; border-color: #f97316; }

.mins {
    margin-left: 8px;
    color: #94a3b8;
    font-size: 11px;
    white-space: nowrap;
}
```
